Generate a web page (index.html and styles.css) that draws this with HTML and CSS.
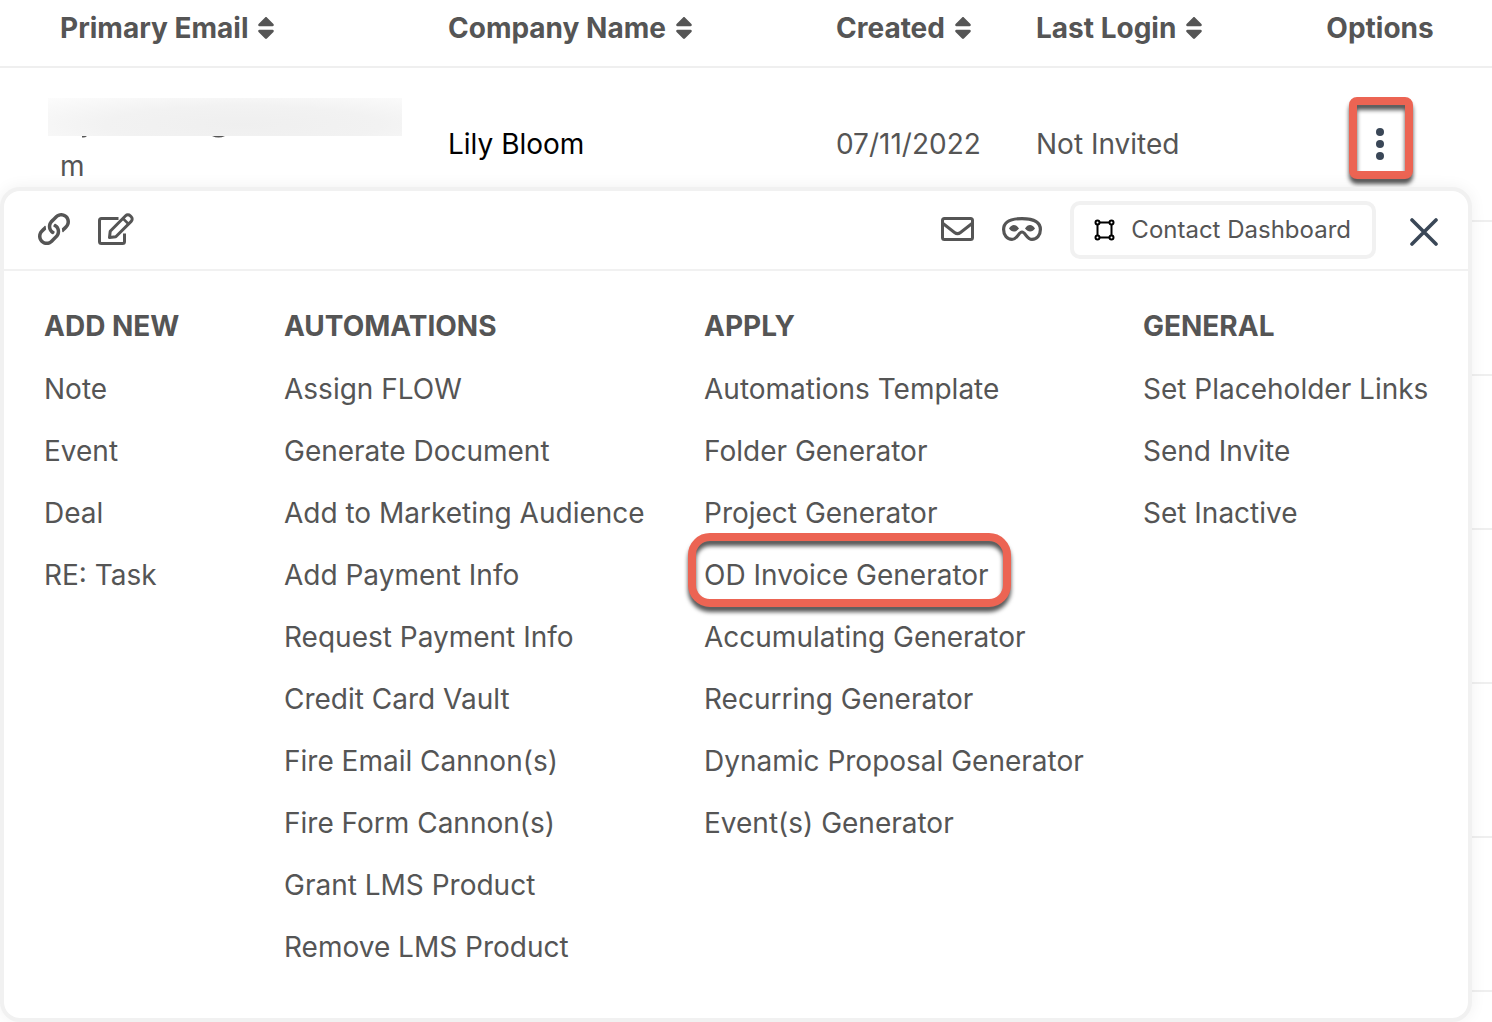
FILE: index.html
```html
<!DOCTYPE html>
<html lang="en">
<head>
<meta charset="utf-8">
<meta name="viewport" content="width=device-width, initial-scale=1">
<title>Contacts</title>
<link rel="stylesheet" href="styles.css">
</head>
<body>
<svg class="defs" aria-hidden="true">
  <symbol id="sort" viewBox="0 0 320 512"><path d="M41 288h238c21.400 0 32.100 25.900 17 41L177 448c-9.400 9.400-24.600 9.400-33.900 0L24 329c-15.100-15.100-4.400-41 17-41zm255-105L177 64c-9.400-9.400-24.600-9.400-33.900 0L24 183c-15.100 15.100-4.400 41 17 41h238c21.400 0 32.100-25.900 17-41z"/></symbol>
</svg>
<main class="contacts">
  <table class="grid">
    <colgroup>
      <col class="col-email"><col class="col-company"><col class="col-created"><col class="col-login"><col>
    </colgroup>
    <thead>
      <tr>
        <th scope="col"><button type="button" class="sort">Primary Email<svg class="sort-icon"><use href="#sort"/></svg></button></th>
        <th scope="col"><button type="button" class="sort">Company Name<svg class="sort-icon"><use href="#sort"/></svg></button></th>
        <th scope="col"><button type="button" class="sort">Created<svg class="sort-icon"><use href="#sort"/></svg></button></th>
        <th scope="col"><button type="button" class="sort">Last Login<svg class="sort-icon"><use href="#sort"/></svg></button></th>
        <th scope="col" class="options">Options</th>
      </tr>
    </thead>
    <tbody>
      <tr>
        <td>
          <div class="redacted"></div>
          <svg class="tails" viewBox="0 0 354 8" aria-hidden="true"><path d="M34 0h5q-2 2-5 1.500zM164 0h13q-6.500 3-13 0z"/></svg>
          <div class="email">m</div>
        </td>
        <td class="company">Lily Bloom</td>
        <td>07/11/2022</td>
        <td>Not Invited</td>
        <td class="options">
          <button type="button" class="more marked" aria-label="Contact options">
            <svg viewBox="0 0 8 32"><circle cx="4" cy="4" r="4"/><circle cx="4" cy="16" r="4"/><circle cx="4" cy="28" r="4"/></svg>
          </button>
        </td>
      </tr>
      <tr><td colspan="5"></td></tr>
      <tr><td colspan="5"></td></tr>
      <tr><td colspan="5"></td></tr>
      <tr><td colspan="5"></td></tr>
      <tr><td colspan="5"></td></tr>
    </tbody>
  </table>

  <section class="panel" aria-label="Contact options">
    <header class="toolbar">
      <button type="button" class="tool" aria-label="Copy link">
        <svg width="32" height="32" viewBox="0 0 512 512"><path fill="currentColor" d="M314.222 197.780c51.091 51.091 54.377 132.287 9.750 187.160-6.242 7.730-2.784 3.865-84.940 86.020-54.696 54.696-143.266 54.745-197.990 0-54.711-54.690-54.734-143.255 0-197.990 32.773-32.773 51.835-51.899 63.409-63.457 7.463-7.452 20.331-2.354 20.486 8.192a173.310 173.310 0 0 0 4.746 37.828c.966 4.029-.272 8.269-3.202 11.198L80.632 312.570c-32.755 32.775-32.887 85.892 0 118.800 32.775 32.755 85.892 32.887 118.800 0l75.190-75.200c32.718-32.725 32.777-86.013 0-118.790a83.722 83.722 0 0 0-22.814-16.229c-4.623-2.233-7.182-7.250-6.561-12.346 1.356-11.122 6.296-21.885 14.815-30.405l4.375-4.375c3.625-3.626 9.177-4.594 13.760-2.294 12.999 6.524 25.187 15.211 36.025 26.049zM470.958 41.040c-54.724-54.745-143.294-54.696-197.990 0-82.156 82.156-78.698 78.290-84.940 86.020-44.627 54.873-41.341 136.069 9.750 187.160 10.838 10.838 23.026 19.525 36.025 26.049 4.582 2.300 10.134 1.331 13.760-2.294l4.375-4.375c8.520-8.519 13.459-19.283 14.815-30.405.621-5.096-1.938-10.113-6.561-12.346a83.706 83.706 0 0 1-22.814-16.229c-32.777-32.777-32.718-86.065 0-118.790l75.190-75.200c32.908-32.887 86.025-32.755 118.800 0 32.887 32.908 32.755 86.025 0 118.800l-45.848 45.840c-2.930 2.929-4.168 7.169-3.202 11.198a173.310 173.310 0 0 1 4.746 37.828c.155 10.546 13.023 15.644 20.486 8.192 11.574-11.558 30.636-30.684 63.409-63.457 54.733-54.735 54.710-143.300-.001-197.991z"/></svg>
      </button>
      <button type="button" class="tool" aria-label="Edit">
        <svg width="36" height="32" viewBox="0 0 36 32" fill="none" stroke="currentColor" stroke-width="3"><path d="M20.500 5.500H3.500a2 2 0 0 0-2 2v21a2 2 0 0 0 2 2h21a2 2 0 0 0 2-2V20.500"/><path stroke-linejoin="round" d="M11.500 24.500l.700-6.200L27.600 2.700a3.200 3.200 0 0 1 4.600 0l1 1a3.200 3.200 0 0 1 0 4.600L17.800 23.800z"/><path stroke-width="2.500" d="M25 5.500l5.500 5.500"/></svg>
      </button>
      <span class="spacer"></span>
      <button type="button" class="tool" aria-label="Send email">
        <svg width="33" height="24" viewBox="0 0 33 24" fill="none" stroke="currentColor" stroke-width="3"><rect x="1.500" y="1.500" width="30" height="21" rx="2"/><path d="M2 6.500l11.500 9q3 2.300 6 0l11.500-9"/></svg>
      </button>
      <button type="button" class="tool" aria-label="View as contact">
        <svg width="40" height="24" viewBox="0 0 40 24"><path fill="none" stroke="currentColor" stroke-width="3.200" d="M20 1.600C11 1.600 1.600 4 1.600 12.500c0 5.500 3.400 9.900 8.400 9.900 5.500 0 6.500-7.400 10-7.400s4.500 7.400 10 7.400c5 0 8.400-4.400 8.400-9.900C38.400 4 29 1.600 20 1.600z"/><path fill="currentColor" d="M7 11.500C9.500 7 14 6.500 17 11.500c-3 4-7.500 4-10 0zM33 11.500c-2.500-4.500-7-5-10 0 3 4 7.500 4 10 0z"/></svg>
      </button>
      <button type="button" class="dashboard">
        <svg width="21" height="22" viewBox="0 0 21 22" fill="none" stroke="#000" stroke-width="2"><path d="M3.500 4v14M17.500 4v14M4 3.500h13M4 18.500h13"/><g fill="#fff"><circle cx="3.500" cy="3.500" r="2"/><circle cx="17.500" cy="3.500" r="2"/><circle cx="3.500" cy="18.500" r="2"/><circle cx="17.500" cy="18.500" r="2"/></g></svg>
        Contact Dashboard
      </button>
      <button type="button" class="close" aria-label="Close">
        <svg width="28" height="28" viewBox="0 0 28 28" fill="none" stroke="#3a4757" stroke-width="3.600" stroke-linecap="round"><path d="M2 2l24 24M26 2L2 26"/></svg>
      </button>
    </header>
    <nav class="menus">
      <div>
        <h2>ADD NEW</h2>
        <ul>
          <li><a href="#">Note</a></li>
          <li><a href="#">Event</a></li>
          <li><a href="#">Deal</a></li>
          <li><a href="#">RE: Task</a></li>
        </ul>
      </div>
      <div>
        <h2>AUTOMATIONS</h2>
        <ul>
          <li><a href="#">Assign FLOW</a></li>
          <li><a href="#">Generate Document</a></li>
          <li><a href="#">Add to Marketing Audience</a></li>
          <li><a href="#">Add Payment Info</a></li>
          <li><a href="#">Request Payment Info</a></li>
          <li><a href="#">Credit Card Vault</a></li>
          <li><a href="#">Fire Email Cannon(s)</a></li>
          <li><a href="#">Fire Form Cannon(s)</a></li>
          <li><a href="#">Grant LMS Product</a></li>
          <li><a href="#">Remove LMS Product</a></li>
        </ul>
      </div>
      <div>
        <h2>APPLY</h2>
        <ul>
          <li><a href="#">Automations Template</a></li>
          <li><a href="#">Folder Generator</a></li>
          <li><a href="#">Project Generator</a></li>
          <li><a href="#" class="marked">OD Invoice Generator</a></li>
          <li><a href="#">Accumulating Generator</a></li>
          <li><a href="#">Recurring Generator</a></li>
          <li><a href="#">Dynamic Proposal Generator</a></li>
          <li><a href="#">Event(s) Generator</a></li>
        </ul>
      </div>
      <div>
        <h2>GENERAL</h2>
        <ul>
          <li><a href="#">Set Placeholder Links</a></li>
          <li><a href="#">Send Invite</a></li>
          <li><a href="#">Set Inactive</a></li>
        </ul>
      </div>
    </nav>
  </section>
</main>
</body>
</html>
```
FILE: styles.css
```css
* { box-sizing: border-box; }

body {
  margin: 0;
  background: #fff;
  color: #555;
  font-family: Inter, "Liberation Sans", sans-serif;
  font-size: 28px;
  font-optical-sizing: none;
}

button {
  padding: 0;
  border: 0;
  background: none;
  color: inherit;
  font: inherit;
  cursor: pointer;
}

svg { display: block; flex: none; }

.defs { position: absolute; width: 0; height: 0; }

.contacts { position: relative; min-height: 100vh; padding-bottom: 30px; }

/* Contact list */
.grid {
  width: 100%;
  table-layout: fixed;
  border-collapse: separate;
  border-spacing: 0;
}

.col-email { width: 436px; }
.col-company { width: 388px; }
.col-created { width: 200px; }
.col-login { width: 290px; }

.grid th,
.grid td {
  padding: 0 12px;
  border-bottom: 2px solid #efefef;
  text-align: left;
  white-space: nowrap;
}

.grid th {
  height: 68px;
  padding-bottom: 10px;
  font-weight: 700;
}

.grid td { height: 154px; }

.grid th:first-child,
.grid td:first-child { padding-left: 60px; }

.grid .options {
  padding-left: 0;
  padding-right: 46px;
  text-align: center;
}

.sort {
  display: flex;
  align-items: center;
  gap: 9px;
}

.sort-icon { width: 18px; height: 28px; fill: currentColor; }

.company { color: #000; }

.redacted {
  width: 354px;
  height: 38px;
  margin-left: -12px;
  background: radial-gradient(ellipse at 55% 70%, #efefef 0%, #f2f2f2 50%, #fcfcfc 100%);
}

.tails {
  width: 354px;
  height: 8px;
  margin-left: -12px;
  fill: currentColor;
}

.email { padding-bottom: 2px; line-height: 44px; }

.more {
  display: block;
  width: 32px;
  margin: 0 auto;
}

.more svg { width: 8px; height: 32px; margin: 0 auto; fill: #3a4757; }

/* Red callout drawn over a control */
.marked { position: relative; }

.marked::after {
  content: "";
  position: absolute;
  inset: -31px -17px -19px -15px;
  border: 8px solid #ec6453;
  border-radius: 8px;
  filter: drop-shadow(0 5px 2px #555);
}

a.marked::after {
  inset: -25px -22px -15px -16px;
  border-radius: 22px;
}

/* Options panel */
.panel {
  position: absolute;
  top: 187px;
  left: 0;
  right: 20px;
  border: 4px solid #f1f1f1;
  border-radius: 20px;
  background: #fff;
  box-shadow: 0 0 16px rgba(0, 0, 0, 0.06);
}

.toolbar {
  display: flex;
  align-items: center;
  gap: 28px;
  height: 80px;
  padding: 0 30px 0 34px;
  border-bottom: 2px solid #f1f1f1;
}

.spacer { flex: 1; }

.tool { margin-bottom: 2px; }

.dashboard {
  display: flex;
  align-items: center;
  gap: 16px;
  padding: 0 21px 0 20px;
  border: 4px solid #f1f1f1;
  border-radius: 10px;
  font-size: 24px;
  line-height: 50px;
  white-space: nowrap;
}

.close { margin: 4px 0 0 6px; }

.menus {
  display: grid;
  grid-template-columns: 180fr 360fr 379fr 285fr;
  gap: 60px;
  padding: 23px 40px 40px;
  white-space: nowrap;
}

.menus > div { min-width: 0; }

.menus h2 {
  margin: 0;
  font-size: 28px;
  font-weight: 700;
  line-height: 64px;
}

.menus ul { margin: 0; padding: 0; list-style: none; }

.menus li { line-height: 62px; }

.menus a { color: inherit; text-decoration: none; }
```
